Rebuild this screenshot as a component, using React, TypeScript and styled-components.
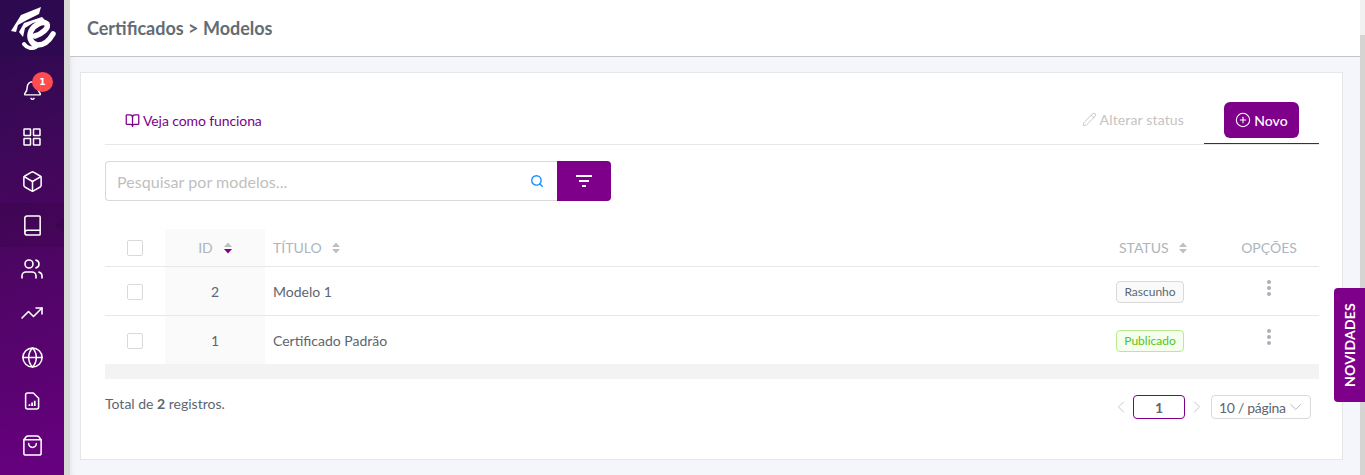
import React from 'react';
import styled, { createGlobalStyle } from 'styled-components';
import {
  Bell, Box, Book, Users, TrendingUp, Globe, ShoppingBag,
  BookOpen, Pencil, CirclePlus, Search, ChevronLeft, ChevronRight, ChevronDown,
} from 'lucide-react';

const GlobalStyle = createGlobalStyle`
  html, body {
    margin: 0;
    padding: 0;
    height: 100%;
    overflow: hidden;
    background: #f4f6fb;
  }

  #root {
    height: 100%;
  }

  * {
    box-sizing: border-box;
  }
`;

const Logo = () => (
  <svg width="64" height="56" viewBox="0 0 64 56">
    <path d="M11 31 L21 15 L41 7 L39 14 L27 20 L18 25 L16 32 Z" fill="#fff" />
    <path d="M19 32 L24 23 L42 17 L45 20 L33 23 L25 28 L23 37 Z" fill="#fff" />
    <g fill="none" stroke="#fff" strokeLinecap="round">
      <path d="M35 36 C42 34 49 28 47 24 C43 20 34 25 31 31 C28 38 32 45 38 45 C44 45 49 41 53 34" strokeWidth="5.500" />
      <path d="M24 44 C27 48 32 49 36 47" strokeWidth="4" />
    </g>
  </svg>
);

const GridIcon = () => (
  <svg width="20" height="20" viewBox="0 0 20 20" fill="none" stroke="#fff" strokeWidth="1.5">
    <rect x="2" y="2" width="6.500" height="6.500" rx="0.500" />
    <rect x="11.500" y="2" width="6.500" height="6.500" rx="0.500" />
    <rect x="2" y="11.500" width="6.500" height="6.500" rx="0.500" />
    <rect x="11.500" y="11.500" width="6.500" height="6.500" rx="0.500" />
  </svg>
);

const ReportIcon = () => (
  <svg width="22" height="22" viewBox="0 0 20 20" fill="none" stroke="#fff" strokeWidth="1.4">
    <path d="M6 2.700h5.200L16 7.500v8c0 1-.8 1.800-1.800 1.800H6c-1 0-1.800-.8-1.800-1.800v-11C4.200 3.500 5 2.700 6 2.700Z" strokeLinejoin="round" />
    <path d="M7.700 14.500v-1.500M10.100 14.500v-3.200M12.500 14.500v-4.700" strokeWidth="1.600" />
  </svg>
);

const FilterIcon = () => (
  <svg width="18" height="14" viewBox="0 0 18 14" fill="none" stroke="#fff" strokeWidth="2">
    <path d="M1 2h16M4 7h10M7 12h4" />
  </svg>
);

const DotsIcon = () => (
  <svg width="6" height="16" viewBox="0 0 6 16" fill="currentColor">
    <circle cx="3" cy="2" r="2" />
    <circle cx="3" cy="8" r="2" />
    <circle cx="3" cy="14" r="2" />
  </svg>
);

const SortArrows = ({ active }: { active?: boolean }) => (
  <SortIcon viewBox="0 0 8 12">
    <path d="M4 0.500 L8 5 H0 Z" fill="#bfbfbf" />
    <path d="M4 11.500 L8 7 H0 Z" fill={active ? '#7e008a' : '#bfbfbf'} />
  </SortIcon>
);

const iconProps = { size: 23, strokeWidth: 1.6 };

const rows = [
  { id: 2, title: 'Modelo 1', status: 'Rascunho', published: false },
  { id: 1, title: 'Certificado Padrão', status: 'Publicado', published: true },
];

export default function App() {
  return (
    <>
      <GlobalStyle />
      <Page>
        <Sidebar>
          <LogoBox>
            <Logo />
          </LogoBox>
          <BellItem>
            <Bell size={21} strokeWidth={1.7} />
            <Badge>1</Badge>
          </BellItem>
          <NavItem>
            <GridIcon />
          </NavItem>
          <NavItem>
            <Box {...iconProps} />
          </NavItem>
          <NavItem $active>
            <Book {...iconProps} />
          </NavItem>
          <NavItem>
            <Users size={24} strokeWidth={1.6} />
          </NavItem>
          <NavItem>
            <TrendingUp size={24} strokeWidth={1.6} />
          </NavItem>
          <NavItem>
            <Globe {...iconProps} />
          </NavItem>
          <NavItem>
            <ReportIcon />
          </NavItem>
          <NavItem>
            <ShoppingBag {...iconProps} />
          </NavItem>
        </Sidebar>

        <Main>
          <Header>
            <HeaderTitle>Certificados &gt; Modelos</HeaderTitle>
          </Header>

          <Content>
            <Card>
              <Toolbar>
                <HelpLink>
                  <BookOpen size={15} strokeWidth={2} />
                  Veja como funciona
                </HelpLink>
                <ToolbarActions>
                  <StatusAction>
                    <Pencil size={15} strokeWidth={1.5} />
                    Alterar status
                  </StatusAction>
                  <NewTab>
                    <NewButton>
                      <CirclePlus size={16} strokeWidth={1.6} />
                      Novo
                    </NewButton>
                  </NewTab>
                </ToolbarActions>
              </Toolbar>

              <SearchRow>
                <SearchBox>
                  <SearchText>Pesquisar por modelos...</SearchText>
                  <Search size={14} strokeWidth={2.4} color="#1890ff" />
                </SearchBox>
                <FilterButton>
                  <FilterIcon />
                </FilterButton>
              </SearchRow>

              <Table>
                <HeadRow>
                  <CheckCell>
                    <Checkbox />
                  </CheckCell>
                  <IdCell>
                    ID <SortArrows active />
                  </IdCell>
                  <TitleCell>
                    TÍTULO <SortArrows />
                  </TitleCell>
                  <StatusCell $head>
                    STATUS <SortArrows />
                  </StatusCell>
                  <OptionsCell>OPÇÕES</OptionsCell>
                </HeadRow>

                {rows.map((row) => (
                  <BodyRow key={row.id}>
                    <CheckCell>
                      <Checkbox />
                    </CheckCell>
                    <IdCell>{row.id}</IdCell>
                    <TitleCell>{row.title}</TitleCell>
                    <StatusCell>
                      <Tag $published={row.published}>{row.status}</Tag>
                    </StatusCell>
                    <OptionsCell>
                      <Dots>
                        <DotsIcon />
                      </Dots>
                    </OptionsCell>
                  </BodyRow>
                ))}
                <TableScroll />
              </Table>

              <Footer>
                <Total>
                  Total de <b>2</b> registros.
                </Total>
                <Pagination>
                  <ChevronLeft size={20} strokeWidth={1.2} color="#c8c8c8" />
                  <PageInput>1</PageInput>
                  <ChevronRight size={20} strokeWidth={1.2} color="#c8c8c8" />
                  <PageSize>
                    10 / página
                    <ChevronDown size={20} strokeWidth={1} color="#a8a8a8" />
                  </PageSize>
                </Pagination>
              </Footer>
            </Card>
          </Content>
        </Main>

        <ScrollTrack />

        <NewsTab>NOVIDADES</NewsTab>
      </Page>
    </>
  );
}

const Page = styled.div`
  position: relative;
  display: flex;
  height: 475px;
  overflow: hidden;
  font-family: 'Lato', sans-serif;
  background: #f4f6fb;
`;

const Sidebar = styled.div`
  flex: 0 0 64px;
  display: flex;
  flex-direction: column;
  align-items: center;
  color: #fff;
  background: linear-gradient(160deg, #2a0a4c 0%, #4a0660 50%, #680080 100%);
`;

const LogoBox = styled.div`
  flex: 0 0 56px;
  display: flex;
  width: 100%;
  margin-bottom: 12px;
  background: #2d0a50;
`;

const NavItem = styled.div<{ $active?: boolean }>`
  position: relative;
  flex: 0 0 44px;
  width: 100%;
  display: flex;
  align-items: center;
  justify-content: center;
  background: ${(props) => (props.$active ? '#00000014' : 'none')};

  &::after {
    content: '';
    display: ${(props) => (props.$active ? 'block' : 'none')};
    position: absolute;
    right: 0;
    top: 14px;
    border: 8px solid transparent;
    border-right-color: #00000014;
  }
`;

const BellItem = styled(NavItem)`
  margin-bottom: 3px;
`;

const Badge = styled.span`
  position: absolute;
  top: 4px;
  left: 32px;
  width: 21px;
  height: 20px;
  border-radius: 50%;
  background: #ff4d4f;
  color: #fff;
  font-size: 9px;
  font-weight: 700;
  font-family: 'DejaVu Sans', sans-serif;
  display: flex;
  align-items: center;
  justify-content: center;
`;

const Main = styled.div`
  flex: 1;
  min-width: 0;
  display: flex;
  flex-direction: column;
  border-left: 6px solid #d9d9d6;
`;

const Header = styled.div`
  flex: 0 0 57px;
  display: flex;
  align-items: center;
  padding: 0 17px;
  background: #fff;
  border-bottom: 1px solid #c4c5c9;
`;

const HeaderTitle = styled.div`
  font-size: 18px;
  font-weight: 700;
  color: #646c73;
`;

const Content = styled.div`
  flex: 1;
  padding: 15px 17px 15px 10px;
  box-shadow: inset 6px 0 6px -6px #0000001a;
`;

const ScrollTrack = styled.div`
  flex: 0 0 5px;
  background: linear-gradient(180deg, #f1f1f1 35px, #d6d4d2 35px);
`;

const Card = styled.div`
  height: 388px;
  padding: 29px 23px 0 24px;
  background: #fff;
  border: 1px solid #e6e6e6;
`;

const Toolbar = styled.div`
  display: flex;
  align-items: center;
  justify-content: space-between;
  height: 43px;
  border-bottom: 1px solid #e8e8e8;
`;

const HelpLink = styled.div`
  display: flex;
  align-items: center;
  gap: 3px;
  padding: 0 0 5px 20px;
  font-size: 14px;
  letter-spacing: -0.1px;
  color: #7e008a;
`;

const ToolbarActions = styled.div`
  display: flex;
  align-items: flex-start;
  height: 100%;
`;

const StatusAction = styled.div`
  display: flex;
  align-items: center;
  gap: 3px;
  height: 34px;
  margin-right: 20px;
  font-size: 14px;
  letter-spacing: 0.15px;
  color: #c4c4c4;
`;

const NewTab = styled.div`
  width: 115px;
  height: 42px;
  padding-left: 20px;
  border-bottom: 1px solid #7e008a;
`;

const NewButton = styled.div`
  display: flex;
  align-items: center;
  justify-content: center;
  gap: 3px;
  width: 75px;
  height: 36px;
  border-radius: 6px;
  background: #7e008a;
  color: #fff;
  font-size: 14px;
  font-weight: 500;
`;

const SearchRow = styled.div`
  display: flex;
  margin-top: 16px;
`;

const SearchBox = styled.div`
  width: 452px;
  height: 40px;
  display: flex;
  align-items: center;
  justify-content: space-between;
  padding: 0 13px 0 11px;
  border: 1px solid #d9d9d9;
  border-right: none;
  border-radius: 4px 0 0 4px;
`;

const SearchText = styled.span`
  font-size: 16px;
  letter-spacing: 0.05px;
  color: #bfbfbf;
`;

const FilterButton = styled.div`
  width: 54px;
  height: 40px;
  display: flex;
  align-items: center;
  justify-content: center;
  background: #7e008a;
  border-radius: 0 4px 4px 0;
`;

const Table = styled.div`
  margin-top: 28px;
`;

const HeadRow = styled.div`
  display: flex;
  height: 38px;
  font-size: 14px;
  color: #adb5bd;
  border-bottom: 1px solid #e8e8e8;
`;

const CheckCell = styled.div`
  flex: 0 0 60px;
  display: flex;
  align-items: center;
  padding-left: 22px;
`;

const BodyRow = styled.div`
  display: flex;
  height: 49px;
  font-size: 14px;
  color: #5c6670;
  border-bottom: 1px solid #e8e8e8;

  &:nth-last-child(2) {
    height: 48px;
    border-bottom: none;
  }

  ${CheckCell} {
    padding-top: 2px;
  }
`;

const Checkbox = styled.div`
  width: 16px;
  height: 16px;
  border: 1px solid #d9d9d9;
  border-radius: 2px;
  background: #fff;
`;

const IdCell = styled.div`
  flex: 0 0 100px;
  display: flex;
  align-items: center;
  justify-content: center;
  gap: 11px;
  background: #fafafa;
`;

const TitleCell = styled.div`
  flex: 1;
  display: flex;
  align-items: center;
  gap: 10px;
  padding-left: 8px;
`;

const StatusCell = styled.div<{ $head?: boolean }>`
  flex: 0 0 103px;
  display: flex;
  align-items: center;
  gap: 10px;
  padding-left: ${(props) => (props.$head ? '3px' : '0')};
`;

const OptionsCell = styled.div`
  flex: 0 0 100px;
  display: flex;
  align-items: center;
  justify-content: center;
`;

const SortIcon = styled.svg`
  width: 8px;
  height: 12px;
`;

const Tag = styled.span<{ $published: boolean }>`
  display: flex;
  align-items: center;
  justify-content: center;
  width: 68px;
  height: 22px;
  margin-top: 1px;
  border-radius: 4px;
  font-size: 12px;
  color: ${(props) => (props.$published ? '#52c41a' : '#5c6670')};
  background: ${(props) => (props.$published ? '#f6ffed' : '#fafafa')};
  border: 1px solid ${(props) => (props.$published ? '#b7eb8f' : '#d9d9d9')};
`;

const Dots = styled.div`
  display: flex;
  margin-bottom: 6px;
  color: #a9b0ba;
`;

const TableScroll = styled.div`
  height: 15px;
  background: #f3f3f3;
`;

const Footer = styled.div`
  display: flex;
  justify-content: space-between;
  padding: 16px 8px 0 0;
`;

const Total = styled.div`
  font-size: 14px;
  color: #5c6670;
`;

const Pagination = styled.div`
  display: flex;
  align-items: center;
  height: 24px;
  gap: 2px;
`;

const PageInput = styled.div`
  width: 52px;
  height: 24px;
  display: flex;
  align-items: center;
  justify-content: center;
  border: 1px solid #7e008a;
  border-radius: 4px;
  font-size: 14px;
  font-weight: 700;
  color: #5c6670;
`;

const PageSize = styled.div`
  width: 100px;
  height: 24px;
  margin-left: 2px;
  display: flex;
  align-items: center;
  justify-content: space-between;
  padding: 0 5px 0 7px;
  border: 1px solid #d9d9d9;
  border-radius: 4px;
  font-size: 14px;
  letter-spacing: -0.3px;
  white-space: nowrap;
  color: #5c6670;
`;

const NewsTab = styled.div`
  position: absolute;
  right: 0;
  top: 288px;
  width: 31px;
  height: 114px;
  display: flex;
  align-items: center;
  justify-content: center;
  writing-mode: vertical-rl;
  transform: rotate(180deg);
  background: #7e008a;
  border-radius: 0 4px 4px 0;
  color: #fff;
  font-size: 14px;
  font-weight: 700;
  letter-spacing: 0.2px;
`;
